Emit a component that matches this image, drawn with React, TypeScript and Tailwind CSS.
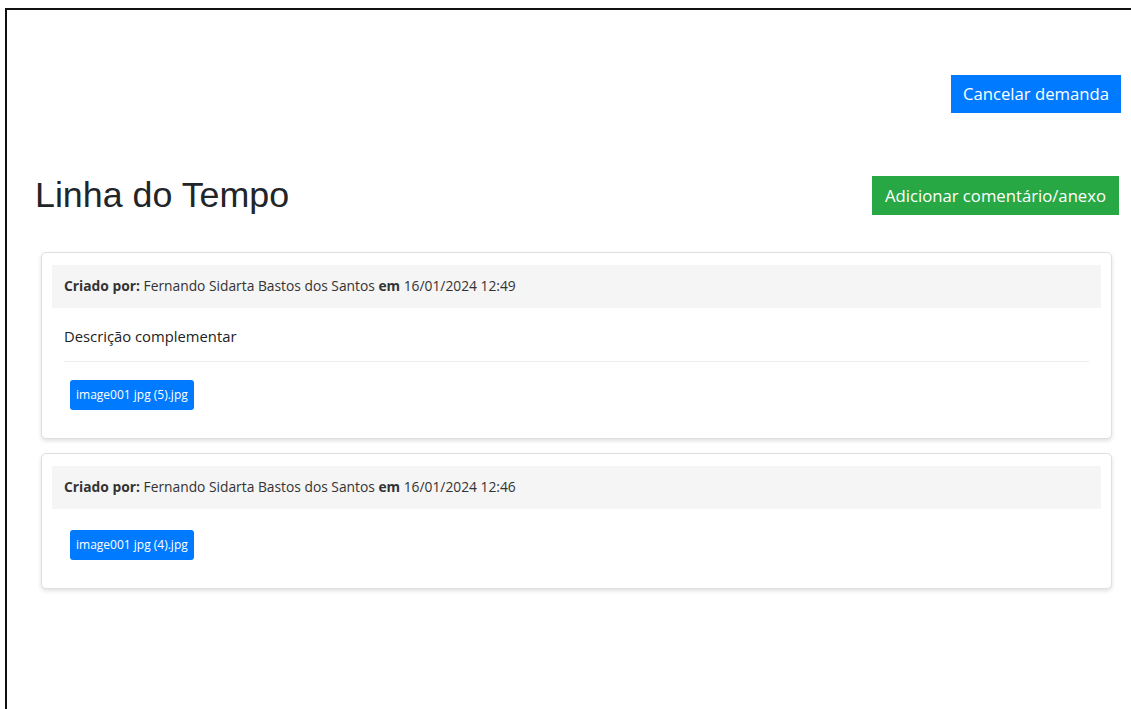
type Entry = {
  author: string;
  date: string;
  description?: string;
  attachment: string;
};

const entries: Entry[] = [
  {
    author: 'Fernando Sidarta Bastos dos Santos',
    date: '16/01/2024 12:49',
    description: 'Descrição complementar',
    attachment: 'image001 jpg (5).jpg',
  },
  {
    author: 'Fernando Sidarta Bastos dos Santos',
    date: '16/01/2024 12:46',
    attachment: 'image001 jpg (4).jpg',
  },
];

const ui = { fontFamily: '"Open Sans", "Noto Sans", sans-serif' };

function TimelineCard({ entry }: { entry: Entry }) {
  return (
    <div className="rounded-[5px] border border-[#dfdfdf] bg-white px-[10px] pt-[12px] pb-[28px] shadow-[0_2px_4px_rgba(0,0,0,0.12)]">
      <div className="flex h-[43px] items-center bg-[#f5f5f5] px-[12px] text-[13.8px] text-[#333]">
        <span>
          <b className="font-bold">Criado por:</b> {entry.author} <b className="font-bold">em</b> {entry.date}
        </span>
      </div>
      <div className="px-[12px]">
        {entry.description ? (
          <>
            <p className="pt-[17px] pb-[14px] text-[14.8px] text-[#222]">{entry.description}</p>
            <hr className="border-t border-[#ececec]" />
          </>
        ) : null}
        <div className={entry.description ? 'pt-[18px] pl-[6px]' : 'pt-[21px] pl-[6px]'}>
          <button className="h-[30px] rounded-[3px] bg-[#007bff] px-[6px] text-[12px] text-white">
            {entry.attachment}
          </button>
        </div>
      </div>
    </div>
  );
}

export default function App() {
  return (
    <div className="min-h-screen bg-white" style={ui}>
      <div className="ml-[5px] mt-[8px] min-h-[701px] border-l-2 border-t-2 border-[#111]">
        <div className="flex justify-end pt-[65px] pr-[10px]">
          <button className="h-[38px] w-[170px] bg-[#007bff] text-[16.7px] text-white">Cancelar demanda</button>
        </div>

        <div className="mt-[63px] flex items-center justify-between pl-[28px] pr-[12px]">
          <h1
            className="text-[35.8px] leading-[39px] text-[#212529]"
            style={{ fontFamily: '"Liberation Sans", Arial, sans-serif' }}
          >
            Linha do Tempo
          </h1>
          <button className="h-[39px] w-[247px] bg-[#28a745] text-[16.7px] text-white">Adicionar comentário/anexo</button>
        </div>

        <div className="ml-[34px] mt-[37px] flex w-[1071px] flex-col gap-[14px]">
          {entries.map((entry, i) => (
            <TimelineCard key={i} entry={entry} />
          ))}
        </div>
      </div>
    </div>
  );
}
